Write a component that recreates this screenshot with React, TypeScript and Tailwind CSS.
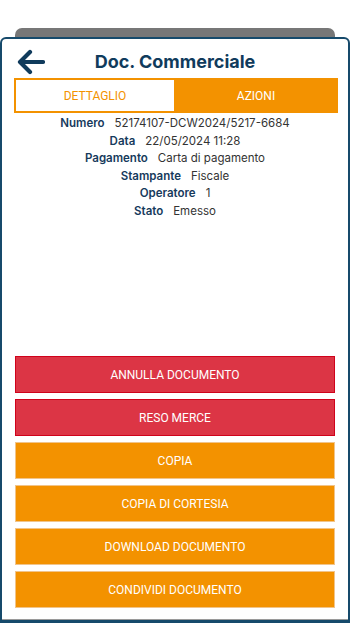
import { ReactNode } from "react";

const rows: [string, string][] = [
  ["Numero", "52174107-DCW2024/5217-6684"],
  ["Data", "22/05/2024 11:28"],
  ["Pagamento", "Carta di pagamento"],
  ["Stampante", "Fiscale"],
  ["Operatore", "1"],
  ["Stato", "Emesso"],
];

const ActionButton = ({ children, danger }: { children: ReactNode; danger?: boolean }) => (
  <button
    className={
      danger
        ? "flex h-[37px] w-full items-center justify-center border border-[#d0021b] bg-[#dc3545] font-['Roboto',sans-serif] text-[12px] text-white"
        : "flex h-[37px] w-full items-center justify-center border border-[#f1c48a] bg-[#f39200] font-['Roboto',sans-serif] text-[12px] text-white"
    }
  >
    {children}
  </button>
);

export default function App() {
  return (
    <div className="flex h-[623px] w-[350px] flex-col bg-white pt-[28px] font-['Inter',sans-serif]">
      {/* tab behind the card */}
      <div className="mx-[15px] h-[10px] shrink-0 rounded-t-[7px] bg-[#777777]" />

      <div className="-mt-px flex flex-1 flex-col rounded-t-[6px] border-x-2 border-t-2 border-b-[3px] border-[#164a6b] bg-white shadow-[inset_0_-1px_0_#9a9a9a]">
        {/* header */}
        <div className="grid grid-cols-[48px_1fr_48px] items-center pt-[9px]">
          <button className="flex items-center justify-center pl-[10px]">
            <svg width="28" height="26" viewBox="0 0 28 26" fill="none">
              <path
                d="M26 13H4M13 3L3 13l10 10"
                stroke="#103b5c"
                strokeWidth="4.2"
                strokeLinecap="round"
                strokeLinejoin="round"
              />
            </svg>
          </button>
          <h1 className="text-center text-[18px] font-bold text-[#103b5c]">Doc. Commerciale</h1>
          <div />
        </div>

        {/* tabs */}
        <div className="mt-[3px] ml-[12px] mr-[10px] flex h-[35px] font-['Roboto',sans-serif] text-[12px]">
          <button className="flex w-[160px] items-center justify-center border-2 border-r-0 border-[#f39200] bg-white text-[#f39200]">
            DETTAGLIO
          </button>
          <button className="flex flex-1 items-center justify-center bg-[#f39200] text-white">
            AZIONI
          </button>
        </div>

        {/* details */}
        <div className="mt-[2px] flex flex-col items-center">
          {rows.map(([label, value]) => (
            <div key={label} className="flex h-[17.5px] items-center gap-[10px] text-[11.5px]">
              <span className="font-semibold text-[#163a5c]">{label}</span>
              <span className="text-[#333333]">{value}</span>
            </div>
          ))}
        </div>

        {/* actions */}
        <div className="mt-auto flex flex-col gap-[6px] pb-[12px] pl-[13px] pr-[13px]">
          <ActionButton danger>ANNULLA DOCUMENTO</ActionButton>
          <ActionButton danger>RESO MERCE</ActionButton>
          <ActionButton>COPIA</ActionButton>
          <ActionButton>COPIA DI CORTESIA</ActionButton>
          <ActionButton>DOWNLOAD DOCUMENTO</ActionButton>
          <ActionButton>CONDIVIDI DOCUMENTO</ActionButton>
        </div>
      </div>
    </div>
  );
}
